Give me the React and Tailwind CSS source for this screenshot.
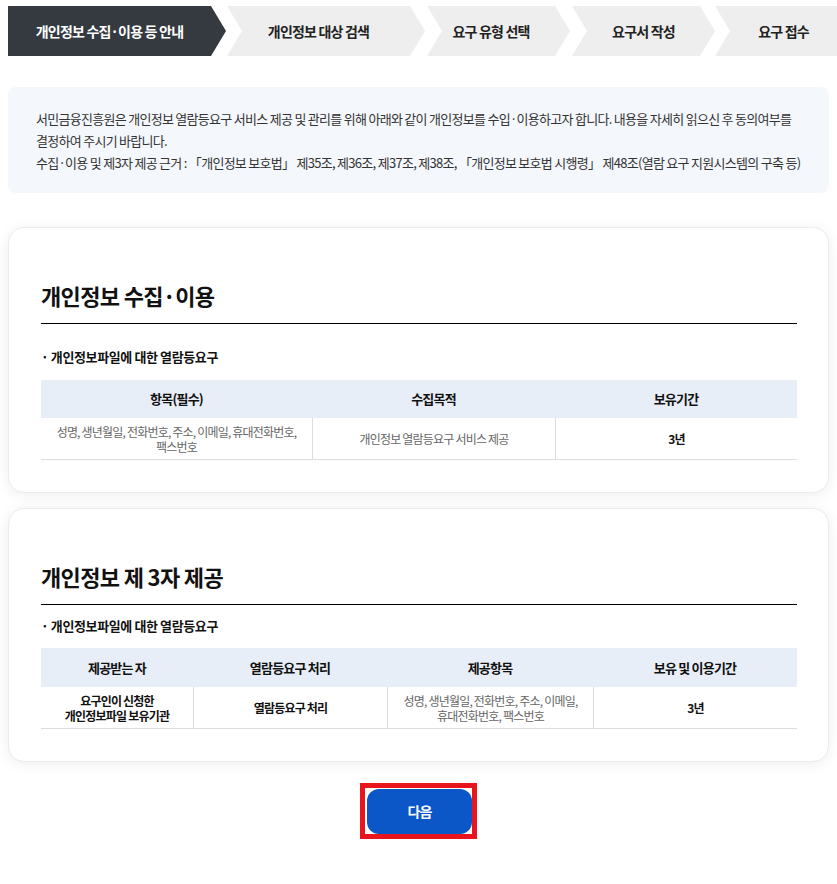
import React from "react";

function Steps() {
  const base =
    "h-[50px] shrink-0 flex items-center justify-center text-[14px] font-bold whitespace-nowrap";
  const first =
    "[clip-path:polygon(0_0,calc(100%_-_15px)_0,100%_50%,calc(100%_-_15px)_100%,0_100%)]";
  const mid =
    "[clip-path:polygon(0_0,calc(100%_-_15px)_0,100%_50%,calc(100%_-_15px)_100%,0_100%,15px_50%)]";
  const last = "[clip-path:polygon(0_0,100%_0,100%_100%,0_100%,15px_50%)]";
  return (
    <div className="mt-[6px] flex h-[50px] overflow-hidden pl-2">
      <div className={`${base} ${first} w-[218px] bg-[#343a40] pr-[15px] text-white`}>
        개인정보 수집·이용 등 안내
      </div>
      <div className={`${base} ${mid} ml-[1px] w-[198px] bg-[#eeeeee] pr-[15px] text-[#222]`}>
        개인정보 대상 검색
      </div>
      <div className={`${base} ${mid} ml-[2px] w-[143px] bg-[#eeeeee] pr-[15px] text-[#222]`}>
        요구 유형 선택
      </div>
      <div className={`${base} ${mid} ml-[2px] w-[143px] bg-[#eeeeee] px-[15px] text-[#222]`}>
        요구서 작성
      </div>
      <div className={`${base} ${last} flex-1 shrink bg-[#eeeeee] pl-[15px] text-[#222]`}>
        요구 접수
      </div>
    </div>
  );
}

function Card({ title, subMt, children }) {
  return (
    <div className="rounded-[16px] border border-[#ececec] bg-white pb-[32px] pl-[32px] pr-[31px] pt-[52px] shadow-[0_2px_14px_rgba(0,0,0,0.07)]">
      <h2 className="border-b border-black pb-[13px] text-[22px] font-bold leading-[30px] tracking-[-0.03em] text-[#111]">
        {title}
      </h2>
      <p className={`${subMt} text-[13px] font-bold leading-[16px] tracking-[-0.03em] text-[#111]`}>
        · 개인정보파일에 대한 열람등요구
      </p>
      {children}
    </div>
  );
}

const th = "flex items-center justify-center bg-[#e8eef7] text-[13px] font-bold text-[#111]";
const td = "flex h-[42px] items-center justify-center border-b border-[#dcdcdc] text-[12px] leading-[15px]";

export default function App() {
  return (
    <div className="min-h-[884px] bg-white font-['Noto_Sans_CJK_KR','Noto_Sans',sans-serif] tracking-[-0.05em] text-[#222]">
      <Steps />
      <div className="px-2">
        <div className="mt-[31px] whitespace-nowrap rounded-lg bg-[#f4f7fc] pb-[19px] pl-[28px] pr-[10px] pt-[21px] text-[13px] leading-[22px] tracking-[-0.055em] text-[#333]">
          서민금융진흥원은 개인정보 열람등요구 서비스 제공 및 관리를 위해 아래와 같이 개인정보를 수입·이용하고자 합니다. 내용을 자세히 읽으신 후 동의여부를
          <br />
          결정하여 주시기 바랍니다.
          <br />
          수집·이용 및 제3자 제공 근거 : 「개인정보 보호법」 제35조, 제36조, 제37조, 제38조, 「개인정보 보호법 시행령」 제48조(열람 요구 지원시스템의 구축 등)
        </div>

        <div className="mt-[34px] flex flex-col gap-[15px]">
          <Card title="개인정보 수집·이용" subMt="mt-[25px]">
            <div className="mt-[15px] grid grid-cols-[271px_243px_1fr] text-center">
              <div className={`${th} h-[38px]`}>항목(필수)</div>
              <div className={`${th} h-[38px]`}>수집목적</div>
              <div className={`${th} h-[38px]`}>보유기간</div>
              <div className={`${td} text-[#666]`}>
                <span>
                  성명, 생년월일, 전화번호, 주소, 이메일, 휴대전화번호,
                  <br />
                  팩스번호
                </span>
              </div>
              <div className={`${td} border-l text-[#666]`}>개인정보 열람등요구 서비스 제공</div>
              <div className={`${td} border-l font-bold text-[#111]`}>3년</div>
            </div>
          </Card>

          <Card title="개인정보 제 3자 제공" subMt="mt-[13px]">
            <div className="mt-[14px] grid grid-cols-[152px_194px_206px_1fr] text-center">
              <div className={`${th} h-[39px]`}>제공받는 자</div>
              <div className={`${th} h-[39px]`}>열람등요구 처리</div>
              <div className={`${th} h-[39px]`}>제공항목</div>
              <div className={`${th} h-[39px]`}>보유 및 이용기간</div>
              <div className={`${td} font-bold text-[#111]`}>
                <span>
                  요구인이 신청한
                  <br />
                  개인정보파일 보유기관
                </span>
              </div>
              <div className={`${td} border-l font-bold text-[#111]`}>열람등요구 처리</div>
              <div className={`${td} border-l text-[#666]`}>
                <span>
                  성명, 생년월일, 전화번호, 주소, 이메일,
                  <br />
                  휴대전화번호, 팩스번호
                </span>
              </div>
              <div className={`${td} border-l font-bold text-[#111]`}>3년</div>
            </div>
          </Card>
        </div>

        <div className="mt-[21px] flex justify-center">
          <div className="border-[5px] border-[#e8151f] pl-[2px] pt-[1px]">
            <button className="flex h-[45px] w-[105px] items-center justify-center rounded-[12px] bg-[#0b57c8] text-[14px] font-bold text-white">
              다음
            </button>
          </div>
        </div>
      </div>
    </div>
  );
}
